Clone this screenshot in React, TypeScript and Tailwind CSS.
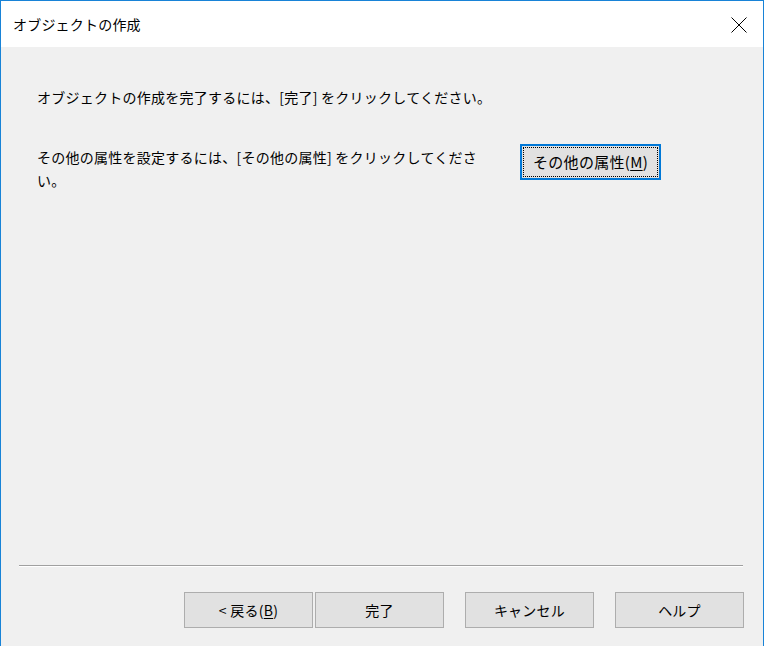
import React from 'react';

const font = "font-['Noto_Sans_CJK_JP','Noto_Sans',sans-serif]";

function WinButton({ children, className = '' }: { children: React.ReactNode; className?: string }) {
  return (
    <button
      type="button"
      className={`h-[36px] w-[129px] border border-[#adadad] bg-[#e1e1e1] text-[14px] tracking-[0.25px] text-black ${className}`}
    >
      {children}
    </button>
  );
}

function App() {
  return (
    <div
      className={`flex h-[646px] w-[764px] flex-col border-x border-t border-[#1883d7] bg-[#f0f0f0] text-black ${font}`}
    >
      {/* title bar */}
      <div className="flex h-[46px] shrink-0 items-center justify-between bg-white pl-[12px] pr-[16px]">
        <span className="text-[14px] tracking-[0.2px]">オブジェクトの作成</span>
        <svg width="16" height="16" viewBox="0 0 16 16" className="mt-[1px]">
          <path d="M0.5 0.5 L15.5 15.5 M15.5 0.5 L0.5 15.5" stroke="#000" strokeWidth="1" fill="none" />
        </svg>
      </div>

      <div className="flex flex-1 flex-col pl-[36px] pt-[39px]">
        <p className="text-[14px] leading-[22px] tracking-[0.25px]">
          オブジェクトの作成を完了するには、[完了] をクリックしてください。
        </p>

        <div className="mt-[36px] flex items-start">
          <p className="mt-[2px] w-[462px] text-[14px] leading-[23px] tracking-[0.25px]">
            その他の属性を設定するには、[その他の属性] をクリックしてください。
          </p>
          <button
            type="button"
            className="ml-[21px] flex h-[36px] w-[141px] items-center justify-center border-2 border-[#0078d7] bg-[#e1e1e1] p-[1px]"
          >
            <span className="flex h-full w-full items-center justify-center border border-dotted border-black text-[15px] tracking-[0.3px]">
              その他の属性(<span className="underline underline-offset-2">M</span>)
            </span>
          </button>
        </div>
      </div>

      {/* footer */}
      <div className="shrink-0">
        <div className="ml-[18px] mr-[20px] border-t border-b border-t-[#a0a0a0] border-b-white" />
        <div className="mb-[18px] mt-[25px] flex justify-end pr-[19px]">
          <WinButton>
            &lt; 戻る(<span className="underline underline-offset-2">B</span>)
          </WinButton>
          <WinButton className="ml-[2px]">完了</WinButton>
          <WinButton className="ml-[21px]">キャンセル</WinButton>
          <WinButton className="ml-[21px]">ヘルプ</WinButton>
        </div>
      </div>
    </div>
  );
}

export default App;
